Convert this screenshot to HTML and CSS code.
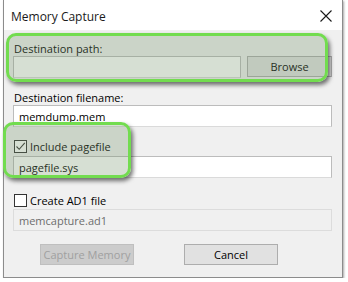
FILE: index.html
```html
<!DOCTYPE html>
<html lang="en">

<head>
    <meta charset="UTF-8">
    <meta name="viewport" content="width=device-width, initial-scale=1.0">
    <title>Memory Capture</title>
    <link rel="stylesheet" href="styles.css">
</head>

<body>
    <div class="ventana">
        <div class="barra_titulo">
            <span class="titulo">Memory Capture</span>
            <svg class="cerrar" width="12" height="12" viewBox="0 0 12 12">
                <path d="M0.5 0.5 L11.5 11.5 M11.5 0.5 L0.5 11.5" stroke="#1a1a1a" stroke-width="1.1" fill="none"/>
            </svg>
        </div>
        <div class="contenido">
            <label class="etiqueta etiqueta_primera">Destination path:</label>
            <div class="fila_ruta">
                <input type="text" class="caja caja_ruta" value="">
                <button class="boton boton_browse">Browse</button>
            </div>

            <label class="etiqueta etiqueta_nombre">Destination filename:</label>
            <input type="text" class="caja" value="memdump.mem">

            <div class="fila_check check_pagefile">
                <span class="casilla">
                    <svg width="11" height="11" viewBox="0 0 11 11">
                        <path d="M1.5 5.5 L4.2 8.3 L9.8 1.8" stroke="#333" stroke-width="1.1" fill="none"/>
                    </svg>
                </span>
                <span>Include pagefile</span>
            </div>
            <input type="text" class="caja" value="pagefile.sys">

            <div class="fila_check check_ad1">
                <span class="casilla"></span>
                <span>Create AD1 file</span>
            </div>
            <input type="text" class="caja caja_deshabilitada" value="memcapture.ad1" disabled>

            <div class="fila_botones">
                <button class="boton boton_deshabilitado" disabled>Capture Memory</button>
                <button class="boton boton_cancel">Cancel</button>
            </div>
        </div>

        <div class="resaltado resaltado_ruta"></div>
        <div class="resaltado resaltado_pagefile"></div>
    </div>
</body>

</html>
```

FILE: styles.css
```css
* {
    padding: 0;
    margin: 0;
    box-sizing: border-box;
}

body {
    background: #ffffff;
    font-family: "Open Sans", "Noto Sans", sans-serif;
    font-size: 11px;
    color: #000;
}

.ventana {
    position: relative;
    width: 340px;
    height: 278px;
    margin-left: 3px;
    border: 1px solid #8c8c8c;
    border-top: none;
    background: #f0f0f0;
    box-shadow: 1px 1px 2px rgba(0, 0, 0, 0.35);
}

.barra_titulo {
    height: 30px;
    background: #ffffff;
    display: flex;
    align-items: center;
    justify-content: space-between;
    padding: 3px 10px 0 7px;
}

.titulo {
    font-size: 12px;
    color: #1a1a1a;
}

.cerrar {
    margin-top: -1px;
}

.contenido {
    padding: 0 10px 0 9px;
    display: flex;
    flex-direction: column;
}

.etiqueta {
    display: block;
    line-height: 15px;
    padding-left: 1px;
}

.etiqueta_primera {
    margin-top: 11px;
}

.etiqueta_nombre {
    margin-top: 12px;
}

.fila_ruta {
    display: flex;
    gap: 6px;
    align-items: flex-start;
}

.caja {
    height: 22px;
    width: 100%;
    border: 1px solid #bcbcbc;
    border-bottom-color: #dadada;
    background: #ffffff;
    font-family: inherit;
    font-size: 11px;
    padding: 0 5px;
    color: #000;
    outline: none;
}

.caja_ruta {
    flex: 1;
}

.caja_deshabilitada {
    background: #f0f0f0;
    border-color: #dcdcdc;
    color: #6d6d6d;
}

.boton {
    height: 21px;
    font-family: inherit;
    font-size: 11px;
    border: 1px solid #adadad;
    background: #e1e1e1;
    color: #000;
    white-space: nowrap;
}

.boton_browse {
    width: 85px;
    flex: none;
}

.fila_check {
    display: flex;
    align-items: center;
    gap: 3px;
    height: 15px;
    padding-left: 1px;
    margin-bottom: 2px;
}

.check_pagefile {
    margin-top: 12px;
}

.check_ad1 {
    margin-top: 15px;
    margin-bottom: 1px;
}

.casilla {
    width: 13px;
    height: 13px;
    border: 1px solid #333;
    background: #fff;
    display: flex;
    align-items: center;
    justify-content: center;
}

.fila_botones {
    display: flex;
    gap: 50px;
    padding-left: 27px;
    margin-top: 13px;
}

.fila_botones .boton {
    width: 94px;
}

.boton_deshabilitado {
    background: #cccccc;
    border-color: #bfbfbf;
    color: #a0a0a0;
}

.resaltado {
    position: absolute;
    border: 3px solid #72dc4f;
    border-radius: 10px;
    background: rgba(120, 150, 110, 0.3);
    box-shadow: 2px 3px 4px rgba(0, 0, 0, 0.55);
}

.resaltado_ruta {
    left: 2px;
    top: 33px;
    width: 322px;
    height: 49px;
}

.resaltado_pagefile {
    left: -1px;
    top: 122px;
    width: 128px;
    height: 56px;
}
```
